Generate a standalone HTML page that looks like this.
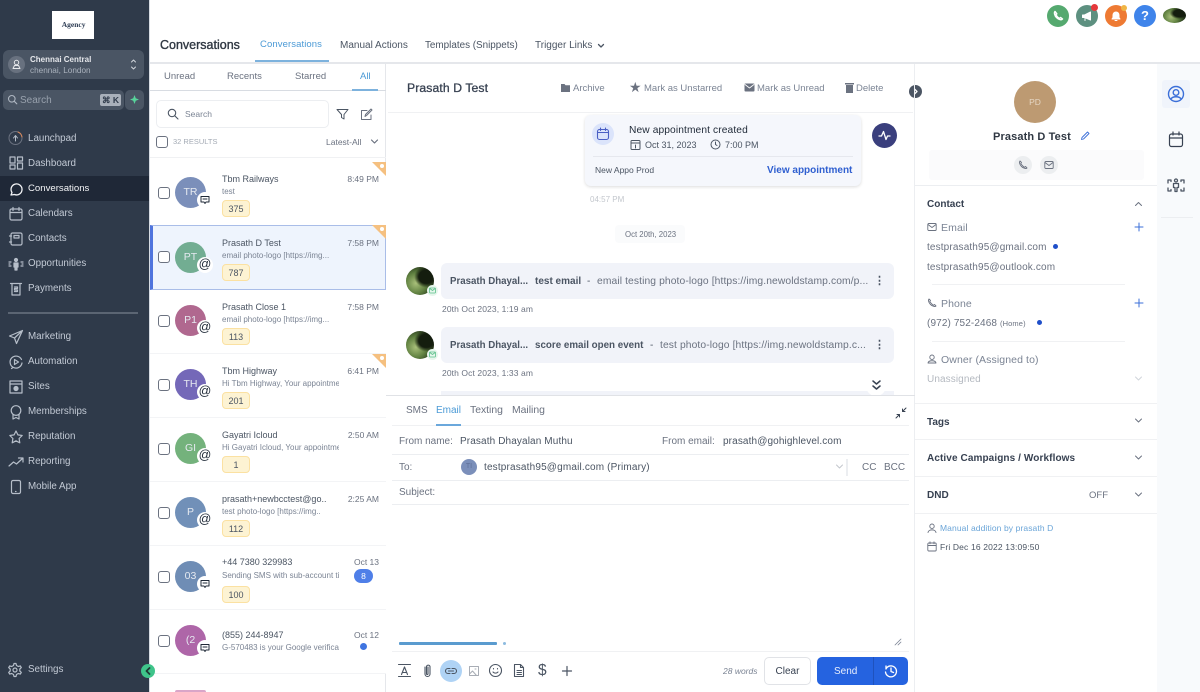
<!DOCTYPE html>
<html><head><meta charset="utf-8">
<style>
*{box-sizing:border-box}
html,body{margin:0;padding:0;width:1200px;height:692px;overflow:hidden;background:#fff;font-family:"Liberation Sans",sans-serif;color:#374151}
body{fill:none;stroke:currentColor;stroke-width:1.5;stroke-linecap:round;stroke-linejoin:round}
.a,.t{position:absolute}
.t{white-space:nowrap;line-height:14px}
svg{position:absolute}
.n{left:28px;font-size:9.8px;color:#c3cad5}
.ni{left:8px;color:#b6bec9}
.row{position:absolute;left:150px;width:236px;height:64px;border-bottom:1px solid #f3f4f6;background:#fff}
.cb{position:absolute;left:8px;top:25px;width:12px;height:12px;border:1px solid #6b7280;border-radius:3px;background:#fff}
.av{position:absolute;left:25px;top:15px;width:31px;height:31px;border-radius:50%;color:#e5e9f0;font-size:10.5px;line-height:31px;text-align:center}
.bd{position:absolute;left:47px;top:30px;width:16px;height:16px;border-radius:50%;background:#fff;color:#1f2937;font-size:12.5px;line-height:15px;text-align:center}
.nm{position:absolute;left:72px;top:11px;font-size:9px;color:#4b5563;white-space:nowrap;line-height:12px}
.pv{position:absolute;left:72px;top:24px;font-size:8px;color:#7b8494;white-space:nowrap;line-height:12px;width:117px;overflow:hidden}
.tg{position:absolute;left:72px;top:38px;width:28px;height:17px;border:1px solid #fbe1a2;background:#fdf3d3;border-radius:4px;font-size:9px;line-height:16px;text-align:center;color:#4b5563}
.tm{position:absolute;right:7px;top:11px;font-size:8.5px;color:#6b7280;line-height:12px;white-space:nowrap}
.st{position:absolute;right:0;top:0;width:0;height:0;border-top:14px solid #f5c080;border-left:14px solid transparent}
.st::after{content:"";position:absolute;right:2px;top:-12px;width:4px;height:4px;background:#fff;border-radius:50%}
.act{font-size:9.5px;color:#7b8494}
.lb{font-size:10.5px;color:#6b7280}
.tb{font-size:10.5px;color:#6b7280}
.h{font-size:10px;font-weight:bold;color:#374151}
.ph{background:radial-gradient(ellipse at 72% 35%,#141d0e 0 26%,transparent 42%),radial-gradient(circle at 35% 58%,#a9c07a 0,#5f8040 42%,#1c2a14 82%)}
</style></head><body>

<!-- sidebar -->
<div class="a" style="left:0;top:0;width:149px;height:692px;background:#2f3a4a"></div>
<div class="a" style="left:149px;top:0;width:1px;height:692px;background:#d7dbe2"></div>
<div class="a" style="left:52px;top:11px;width:42px;height:28px;background:#fff"></div>
<div class="t" style="left:58px;top:18px;font-family:'Liberation Serif',serif;font-size:7.5px;color:#2f3e55;font-weight:bold">&nbsp;&nbsp;Agency</div>
<div class="a" style="left:3px;top:50px;width:141px;height:29px;background:#4a5564;border-radius:6px"></div>
<div class="a" style="left:8px;top:56px;width:17px;height:17px;border-radius:50%;background:#68717f"></div>
<svg style="left:11px;top:59px;color:#e5e7eb" width="11" height="11" viewBox="0 0 11 11" stroke-width="1"><circle cx="5.5" cy="3.5" r="2.2"/><path d="M2 9.5h7l-1.5-3h-4z"/></svg>
<div class="t" style="left:30px;top:54px;font-size:8px;font-weight:bold;color:#e5e7eb;line-height:12px">Chennai Central</div>
<div class="t" style="left:30px;top:65px;font-size:8.2px;color:#aab2bd;line-height:12px">chennai, London</div>
<svg style="left:129px;top:57px;color:#d1d5db" width="9" height="15" viewBox="0 0 9 15" stroke-width="1"><path d="M2.5 5l2-2 2 2M2.5 10l2 2 2-2"/></svg>
<div class="a" style="left:3px;top:90px;width:121px;height:20px;background:#4a5564;border-radius:5px"></div>
<div class="a" style="left:125px;top:90px;width:19px;height:20px;background:#4a5564;border-radius:5px"></div>
<svg style="left:7px;top:94px;color:#aeb6c1" width="11" height="11" viewBox="0 0 11 11" stroke-width="1.100"><circle cx="4.8" cy="4.8" r="3.3"/><path d="M7.3 7.3l2.5 2.5"/></svg>
<div class="t" style="left:20px;top:93px;font-size:10px;color:#98a1ad;line-height:15px">Search</div>
<div class="a" style="left:100px;top:94px;width:21px;height:12px;background:#a9b0ba;border-radius:2px;color:#2f3a4a;font-size:8.5px;line-height:12px;text-align:center;font-weight:bold">⌘ K</div>
<div class="a" style="left:130px;top:95px;width:9px;height:9px;background:#58d39b;clip-path:polygon(50% 0,64% 36%,100% 50%,64% 64%,50% 100%,36% 64%,0 50%,36% 36%)"></div>

<div class="a" style="left:0;top:176px;width:149px;height:25px;background:#1f2837"></div>

<!-- nav icons -->
<svg class="ni" style="top:130px" width="16" height="16" viewBox="0 0 16 16" stroke-width="1"><circle cx="7.5" cy="8" r="6.5" stroke="#6b7280"/><path d="M7.5 11V6M5.500 8l2-2.500 2 2.500"/><path d="M10 2a6.500 6.500 0 0 1 4 5" stroke="#d9885a"/></svg>
<svg class="ni" style="top:155px" width="16" height="16" viewBox="0 0 16 16" stroke-width="1.200"><rect x="2" y="2" width="5" height="6"/><rect x="9.500" y="2" width="5" height="4"/><rect x="2" y="10" width="5" height="4"/><rect x="9.500" y="8" width="5" height="6"/></svg>
<svg style="left:8px;top:181px;color:#f3f4f6" width="16" height="16" viewBox="0 0 16 16" stroke-width="1.300"><path d="M3 14l1-2.500A5.500 5.500 0 1 1 6.500 13.500z"/></svg>
<svg class="ni" style="top:206px" width="16" height="16" viewBox="0 0 16 16" stroke-width="1.200"><rect x="2" y="3" width="12" height="11" rx="1.500"/><path d="M2 6.500h12M5 1.500v3M11 1.500v3"/></svg>
<svg class="ni" style="top:231px" width="16" height="16" viewBox="0 0 16 16" stroke-width="1.200"><rect x="3" y="2" width="11" height="12" rx="1.500"/><path d="M1.500 5h2M1.500 11h2M6 4.500h5v2.500H6z"/></svg>
<svg class="ni" style="top:256px" width="16" height="16" viewBox="0 0 16 16" stroke-width="1.200"><circle cx="8" cy="4" r="1.500" fill="currentColor"/><path d="M6 7h4v4H9v3H7v-3H6z" fill="currentColor"/><path d="M1 6h2M1 8h1M1 10h2M13 6h2M14 8h1M13 10h2"/></svg>
<svg class="ni" style="top:281px" width="16" height="16" viewBox="0 0 16 16" stroke-width="1.200"><path d="M2.500 2.500h11M4 2.500v11.500h8V2.500"/><path d="M6.500 6h3v1.500h-3v1.500h3v1.500h-3"/></svg>
<div class="a" style="left:8px;top:312px;width:130px;height:2px;background:#5b6573"></div>
<svg class="ni" style="top:329px" width="16" height="16" viewBox="0 0 16 16" stroke-width="1.200"><path d="M14.500 1.500L1.500 7l5 2 2 5.500zM6.500 9l8-7.500"/></svg>
<svg class="ni" style="top:354px" width="16" height="16" viewBox="0 0 16 16" stroke-width="1.200"><path d="M13.500 5.500A6 6 0 1 0 14 9M5 13.500l-1.500 1"/><path d="M6.500 5.500l4 2.500-4 2.500z"/></svg>
<svg class="ni" style="top:379px" width="16" height="16" viewBox="0 0 16 16" stroke-width="1.200"><rect x="2" y="2" width="12" height="12"/><path d="M2 5h12"/><circle cx="8" cy="9.500" r="2" fill="currentColor"/></svg>
<svg class="ni" style="top:404px" width="16" height="16" viewBox="0 0 16 16" stroke-width="1.200"><circle cx="8" cy="6.500" r="4.800"/><path d="M5 10.500V15l3-1.500 3 1.500v-4.500"/></svg>
<svg class="ni" style="top:429px" width="16" height="16" viewBox="0 0 16 16" stroke-width="1.200"><path d="M8 2l1.900 3.900 4.300.6-3.100 3 .7 4.300L8 11.800l-3.800 2 .7-4.300-3.100-3 4.300-.6z"/></svg>
<svg class="ni" style="top:454px" width="16" height="16" viewBox="0 0 16 16" stroke-width="1.200"><path d="M1 12l4.500-4 3 2L14.500 4.500M10.500 4h4.500v4"/></svg>
<svg class="ni" style="top:479px" width="16" height="16" viewBox="0 0 16 16" stroke-width="1.200"><rect x="3.500" y="1.500" width="9" height="13" rx="1.500"/><path d="M7.500 12.500h.5"/></svg>
<svg class="ni" style="top:662px" width="16" height="16" viewBox="0 0 16 16" stroke-width="1.200"><circle cx="7" cy="8" r="2"/><path d="M6 1.500h2l.5 2 1.800 1 2-.6 1 1.700-1.500 1.400v2l1.500 1.400-1 1.700-2-.6-1.800 1-.5 2H6l-.5-2-1.800-1-2 .6-1-1.700 1.500-1.400v-2L.7 5.600l1-1.700 2 .6 1.800-1z"/></svg>

<div class="t n" style="top:132px">Launchpad</div>
<div class="t n" style="top:157px">Dashboard</div>
<div class="t n" style="top:182px;color:#f3f4f6;font-size:9.600px">Conversations</div>
<div class="t n" style="top:207px">Calendars</div>
<div class="t n" style="top:232px">Contacts</div>
<div class="t n" style="top:257px">Opportunities</div>
<div class="t n" style="top:282px">Payments</div>
<div class="t n" style="top:330px">Marketing</div>
<div class="t n" style="top:355px">Automation</div>
<div class="t n" style="top:380px">Sites</div>
<div class="t n" style="top:405px">Memberships</div>
<div class="t n" style="top:430px">Reputation</div>
<div class="t n" style="top:455px">Reporting</div>
<div class="t n" style="top:480px">Mobile App</div>
<div class="t n" style="top:663px">Settings</div>

<!-- top bar -->
<div class="a" style="left:150px;top:62px;width:1050px;height:2px;background:#e5e7eb"></div>
<div class="t" style="left:160px;top:38px;font-size:12.500px;color:#2f3742;-webkit-text-stroke:.35px #2f3742">Conversations</div>
<div class="t" style="left:260px;top:38px;font-size:9.500px;color:#4b9ad6;letter-spacing:.1px">Conversations</div>
<div class="a" style="left:255px;top:60px;width:74px;height:2px;background:#7db2dd"></div>
<div class="t" style="left:340px;top:39px;font-size:10px;color:#4b5563">Manual Actions</div>
<div class="t" style="left:425px;top:39px;font-size:9.900px;color:#4b5563">Templates (Snippets)</div>
<div class="t" style="left:535px;top:39px;font-size:10px;color:#4b5563">Trigger Links</div>
<svg style="left:597px;top:42px;color:#4b5563" width="8" height="8" viewBox="0 0 8 8" stroke-width="1.300"><path d="M1.500 2.500L4 5l2.500-2.500"/></svg>

<div class="a" style="left:1047px;top:5px;width:22px;height:22px;border-radius:50%;background:#55a96f"></div>
<svg style="left:1052px;top:10px;color:#fff" width="12" height="12" viewBox="0 0 12 12" stroke-width="1.500"><path d="M3 1.500c-1 1-.5 4 1.500 6s5 3 6 1.500L8.500 7.500 7.500 8.500C6.500 8 4.500 6 3.800 4.800L4.800 3.800z"/></svg>
<div class="a" style="left:1076px;top:5px;width:22px;height:22px;border-radius:50%;background:#5d9080"></div>
<svg style="left:1081px;top:10px;color:#fff" width="12" height="12" viewBox="0 0 12 12" stroke-width="1"><path fill="#fff" d="M1.500 5v2.500h2L9.500 10V2L3.500 5z"/><path d="M4 8v2.500"/></svg>
<div class="a" style="left:1091px;top:4px;width:7px;height:7px;border-radius:50%;background:#e5383b"></div>
<div class="a" style="left:1105px;top:5px;width:22px;height:22px;border-radius:50%;background:#ee7a33"></div>
<svg style="left:1110px;top:10px;color:#fff" width="12" height="12" viewBox="0 0 12 12" stroke-width="1"><path d="M2 9h8L9 7.500V5a3 3 0 0 0-6 0v2.500z" fill="#fff"/><path d="M5 10.500h2"/></svg>
<div class="a" style="left:1121px;top:5px;width:6px;height:6px;border-radius:50%;background:#f0b545"></div>
<div class="a" style="left:1134px;top:5px;width:22px;height:22px;border-radius:50%;background:#3f84ea;color:#fff;font-size:13px;font-weight:bold;line-height:22px;text-align:center">?</div>
<div class="a ph" style="left:1163px;top:8px;width:23px;height:15px;border-radius:50%"></div>

<!-- list header -->
<div class="a" style="left:385px;top:64px;width:1px;height:628px;background:#e5e7eb"></div>
<div class="t tb" style="left:164px;top:70px;font-size:9.500px;line-height:13px">Unread</div>
<div class="t tb" style="left:227px;top:70px;font-size:9.500px;line-height:13px">Recents</div>
<div class="t tb" style="left:295px;top:70px;font-size:9.500px;line-height:13px">Starred</div>
<div class="t" style="left:360px;top:70px;font-size:9.500px;color:#4b9ad6;line-height:13px">All</div>
<div class="a" style="left:150px;top:90px;width:236px;height:1px;background:#d8dce2"></div>
<div class="a" style="left:352px;top:89px;width:26px;height:2px;background:#7db2dd"></div>
<div class="a" style="left:156px;top:100px;width:173px;height:28px;border:1px solid #eceef1;border-radius:5px"></div>
<svg style="left:167px;top:108px;color:#4b5563" width="12" height="12" viewBox="0 0 12 12" stroke-width="1.100"><circle cx="5" cy="5" r="3.700"/><path d="M8 8l3 3"/></svg>
<div class="t" style="left:185px;top:107px;font-size:8.500px;color:#7b8494">Search</div>
<svg style="left:336px;top:108px;color:#4b5563" width="13" height="13" viewBox="0 0 13 13" stroke-width="1"><path d="M1 1.500h11L8 6.500v4.500L5.500 9.500v-3z"/></svg>
<svg style="left:360px;top:108px;color:#6b7280" width="13" height="13" viewBox="0 0 13 13" stroke-width="1"><path d="M11 7v4.500H1.500V2.500H7M5 8.500l.5-2L11 1l1 1-5.500 5.500z"/></svg>
<div class="a" style="left:156px;top:136px;width:12px;height:12px;border:1px solid #6b7280;border-radius:3px"></div>
<div class="t" style="left:173px;top:135px;font-size:7.500px;color:#a3aab4">32 RESULTS</div>
<div class="t" style="left:326px;top:135px;font-size:8.500px;color:#6b7280">Latest-All</div>
<svg style="left:370px;top:138px;color:#6b7280" width="9" height="8" viewBox="0 0 9 8" stroke-width="1.200"><path d="M1.500 2L4.500 5l3-3"/></svg>
<div class="a" style="left:150px;top:157px;width:236px;height:1px;background:#f0f1f3"></div>

<!-- rows -->
<div class="row" style="top:162px"><div class="st"></div><div class="cb"></div><div class="av" style="background:#7b8fba">TR</div><div class="bd"><svg style="left:3px;top:3px" width="10" height="10" viewBox="0 0 10 10" stroke-width="1"><path d="M1 1.500h8v5.500H6L5 8.500 4 7H1zM3 4h4"/></svg></div><div class="nm">Tbm Railways</div><div class="pv">test</div><div class="tg">375</div><div class="tm">8:49 PM</div></div>
<div class="row" style="top:225px;height:65px;background:#eef4fd;border:1px solid #a9bde8;border-left:3px solid #4f74dd"><div class="st" style="top:-1px;right:-1px"></div><div class="cb" style="left:5px;top:25px"></div><div class="av" style="left:22px;top:16px;background:#72ad92">PT</div><div class="bd" style="left:44px;top:31px">@</div><div class="nm" style="left:69px;top:11px">Prasath D Test</div><div class="pv" style="left:69px;top:24px;width:110px">email photo-logo [https://img...</div><div class="tg" style="left:69px;top:38px">787</div><div class="tm" style="right:6px;top:11px">7:58 PM</div></div>
<div class="row" style="top:290px"><div class="cb"></div><div class="av" style="background:#b0688f">P1</div><div class="bd">@</div><div class="nm">Prasath Close 1</div><div class="pv" style="width:110px">email photo-logo [https://img...</div><div class="tg">113</div><div class="tm">7:58 PM</div></div>
<div class="row" style="top:354px"><div class="st"></div><div class="cb"></div><div class="av" style="background:#7468b8">TH</div><div class="bd">@</div><div class="nm">Tbm Highway</div><div class="pv">Hi Tbm Highway, Your appointment</div><div class="tg">201</div><div class="tm">6:41 PM</div></div>
<div class="row" style="top:418px"><div class="cb"></div><div class="av" style="background:#74b27c">GI</div><div class="bd">@</div><div class="nm">Gayatri Icloud</div><div class="pv">Hi Gayatri Icloud, Your appointment</div><div class="tg">1</div><div class="tm">2:50 AM</div></div>
<div class="row" style="top:482px"><div class="cb"></div><div class="av" style="background:#7190b8">P</div><div class="bd">@</div><div class="nm">prasath+newbcctest@go..</div><div class="pv">test photo-logo [https://img..</div><div class="tg">112</div><div class="tm">2:25 AM</div></div>
<div class="row" style="top:546px"><div class="cb"></div><div class="av" style="background:#6f8db5">03</div><div class="bd"><svg style="left:3px;top:3px" width="10" height="10" viewBox="0 0 10 10" stroke-width="1"><path d="M1 1.500h8v5.500H6L5 8.500 4 7H1zM3 4h4"/></svg></div><div class="nm" style="top:10px">+44 7380 329983</div><div class="pv">Sending SMS with sub-account time</div><div class="tg" style="top:40px">100</div><div class="tm" style="top:10px">Oct 13</div><div class="a" style="right:13px;top:23px;width:19px;height:14px;border-radius:7px;background:#4f7fe8;color:#fff;font-size:8.500px;line-height:14px;text-align:center">8</div></div>
<div class="row" style="top:610px"><div class="cb"></div><div class="av" style="background:#ae66a8">(2</div><div class="bd"><svg style="left:3px;top:3px" width="10" height="10" viewBox="0 0 10 10" stroke-width="1"><path d="M1 1.500h8v5.500H6L5 8.500 4 7H1zM3 4h4"/></svg></div><div class="nm" style="top:19px">(855) 244-8947</div><div class="pv" style="top:32px">G-570483 is your Google verification</div><div class="tm" style="top:19px">Oct 12</div><div class="a" style="right:19px;top:33px;width:7px;height:7px;border-radius:50%;background:#3f74e0"></div></div>
<div class="a" style="left:175px;top:690px;width:31px;height:2px;background:#d9a5c8;border-radius:15px 15px 0 0"></div>

<!-- collapse toggle -->
<div class="a" style="left:141px;top:664px;width:14px;height:14px;border-radius:50%;background:#3fc48a"></div>
<svg style="left:144px;top:667px;color:#1f3b36" width="8" height="8" viewBox="0 0 8 8" stroke-width="1.800"><path d="M5.500 1L2.500 4l3 3"/></svg>

<!-- conversation header -->
<div class="t" style="left:407px;top:81px;font-size:12.200px;color:#374151;-webkit-text-stroke:.3px #374151;letter-spacing:.1px">Prasath D Test</div>
<svg style="left:560px;top:83px;fill:#6b7280;stroke:none" width="11" height="10" viewBox="0 0 11 10"><path d="M1 1h3.500l1 1.200H10V9H1z"/></svg>
<div class="t act" style="left:573px;top:82px">Archive</div>
<div class="t" style="left:629px;top:80px;font-size:14px;color:#6b7280">★</div>
<div class="t act" style="left:644px;top:82px">Mark as Unstarred</div>
<svg style="left:744px;top:83px" width="11" height="9" viewBox="0 0 11 9"><rect x=".5" y=".5" width="10" height="8" rx="1" fill="#6b7280" stroke="none"/><path d="M1 1.500l4.500 3.500L10 1.500" stroke="#fff" stroke-width=".8"/></svg>
<div class="t act" style="left:757px;top:82px">Mark as Unread</div>
<svg style="left:845px;top:82px;fill:#6b7280;stroke:none" width="9" height="11" viewBox="0 0 9 11"><path d="M0 1h9v1.500H0zM1 3h7v8H1z"/></svg>
<div class="t act" style="left:856px;top:82px">Delete</div>
<div class="a" style="left:909px;top:85px;width:13px;height:13px;border-radius:50%;background:#4b5563"></div>
<svg style="left:912px;top:88px;color:#fff" width="7" height="7" viewBox="0 0 7 7" stroke-width="1.300"><path d="M2.500 1l2.500 2.500L2.500 6"/></svg>
<div class="a" style="left:388px;top:112px;width:525px;height:1px;background:#f0f1f3"></div>
<div class="a" style="left:914px;top:64px;width:1px;height:628px;background:#eceef1"></div>

<!-- appointment card -->
<div class="a" style="left:585px;top:115px;width:276px;height:71px;background:#f5f7fc;border-radius:6px;box-shadow:0 1px 3px rgba(0,0,0,.14)"></div>
<div class="a" style="left:592px;top:123px;width:22px;height:22px;border-radius:50%;background:#dbe4fb"></div>
<svg style="left:596px;top:127px;color:#4a5fc4" width="14" height="14" viewBox="0 0 14 14" stroke-width="1.100"><rect x="1.500" y="2.500" width="11" height="10" rx="2"/><path d="M1.500 5.500h11M4.500 1v2.500M9.500 1v2.500"/></svg>
<div class="t" style="left:629px;top:123px;font-size:10.200px;color:#1f2937;letter-spacing:.12px;line-height:15px">New appointment created</div>
<svg style="left:630px;top:139px;color:#4b5563" width="11" height="11" viewBox="0 0 11 11" stroke-width="1"><rect x="1" y="1.500" width="9" height="9" rx="1"/><path d="M1 4h9M5.500 6v3"/></svg>
<div class="t" style="left:645px;top:138px;font-size:9px;color:#4b5563;line-height:15px">Oct 31, 2023</div>
<svg style="left:710px;top:139px;color:#4b5563" width="11" height="11" viewBox="0 0 11 11" stroke-width="1"><circle cx="5.500" cy="5.500" r="4.500"/><path d="M5.500 3v2.500l1.500 1"/></svg>
<div class="t" style="left:725px;top:138px;font-size:9px;color:#4b5563;line-height:15px">7:00 PM</div>
<div class="a" style="left:593px;top:156px;width:260px;height:1px;background:#e6e8ee"></div>
<div class="t" style="left:595px;top:163px;font-size:8.500px;color:#4b5563">New Appo Prod</div>
<div class="t" style="left:767px;top:164px;font-size:10px;font-weight:bold;color:#2f5fd0;line-height:14px">View appointment</div>
<div class="a" style="left:872px;top:123px;width:25px;height:25px;border-radius:50%;background:#3a3f7d"></div>
<svg style="left:878px;top:129px;color:#fff" width="13" height="13" viewBox="0 0 13 13" stroke-width="1.300"><path d="M1 7h2.500l2-4.500 2.500 8 1.500-3.500H12"/></svg>
<div class="t" style="left:590px;top:193px;font-size:8px;color:#c3c7cd">04:57 PM</div>
<div class="a" style="left:615px;top:225px;width:70px;height:18px;border-radius:4px;background:#fafbfc"></div>
<div class="t" style="left:625px;top:228px;font-size:7.800px;color:#6b7280">Oct 20th, 2023</div>

<!-- emails -->
<div class="a ph" style="left:406px;top:267px;width:28px;height:28px;border-radius:50%"></div>
<div class="a" style="left:427px;top:285px;width:11px;height:11px;border-radius:50%;background:#e6f6ec"></div>
<svg style="left:429px;top:287px;color:#5cc08a" width="7" height="7" viewBox="0 0 7 7" stroke-width=".8"><rect x=".5" y="1" width="6" height="5" rx=".8"/><path d="M.8 1.500L3.500 3.500 6.200 1.500"/></svg>
<div class="a" style="left:441px;top:263px;width:453px;height:36px;border-radius:6px;background:#f1f3f9"></div>
<div class="t" style="left:450px;top:275px;font-size:9.700px;font-weight:bold;color:#4b5563">Prasath Dhayal...</div>
<div class="t" style="left:535px;top:275px;font-size:10px;font-weight:bold;color:#4b5563">test email</div>
<div class="t" style="left:587px;top:275px;font-size:10px;color:#4b5563">-</div>
<div class="t" style="left:597px;top:275px;font-size:10.300px;color:#6b7280;letter-spacing:.1px">email testing photo-logo [https://img.newoldstamp.com/p...</div>
<div class="t" style="left:874px;top:274px;font-size:11px;font-weight:bold;color:#4b5563">⋮</div>
<div class="t" style="left:442px;top:302px;font-size:8.500px;color:#6b7280;letter-spacing:.1px">20th Oct 2023, 1:19 am</div>

<div class="a ph" style="left:406px;top:331px;width:28px;height:28px;border-radius:50%"></div>
<div class="a" style="left:427px;top:349px;width:11px;height:11px;border-radius:50%;background:#e6f6ec"></div>
<svg style="left:429px;top:351px;color:#5cc08a" width="7" height="7" viewBox="0 0 7 7" stroke-width=".8"><rect x=".5" y="1" width="6" height="5" rx=".8"/><path d="M.8 1.500L3.500 3.500 6.200 1.500"/></svg>
<div class="a" style="left:441px;top:327px;width:453px;height:36px;border-radius:6px;background:#f1f3f9"></div>
<div class="t" style="left:450px;top:339px;font-size:9.700px;font-weight:bold;color:#4b5563">Prasath Dhayal...</div>
<div class="t" style="left:535px;top:339px;font-size:9.800px;font-weight:bold;color:#4b5563">score email open event</div>
<div class="t" style="left:650px;top:339px;font-size:10px;color:#4b5563">-</div>
<div class="t" style="left:660px;top:339px;font-size:10.300px;color:#6b7280;letter-spacing:.1px">test photo-logo [https://img.newoldstamp.c...</div>
<div class="t" style="left:874px;top:338px;font-size:11px;font-weight:bold;color:#4b5563">⋮</div>
<div class="t" style="left:442px;top:366px;font-size:8.500px;color:#6b7280;letter-spacing:.1px">20th Oct 2023, 1:33 am</div>
<div class="a" style="left:441px;top:391px;width:453px;height:5px;background:#f1f3f9"></div>
<div class="a" style="left:866px;top:376px;width:20px;height:20px;border-radius:50%;background:#fff"></div>
<svg style="left:871px;top:379px;color:#374151" width="11" height="13" viewBox="0 0 11 13" stroke-width="1.500"><path d="M2 2l3.500 3L9 2M2 7l3.500 3L9 7"/></svg>
<div class="a" style="left:386px;top:395px;width:529px;height:1px;background:#e0e2e6"></div>

<!-- composer -->
<div class="t tb" style="left:406px;top:404px;font-size:10px;line-height:13px">SMS</div>
<div class="t" style="left:436px;top:404px;font-size:10px;color:#4b9ad6;line-height:13px">Email</div>
<div class="t tb" style="left:470px;top:404px;font-size:10.400px;line-height:13px">Texting</div>
<div class="t tb" style="left:512px;top:404px;font-size:10.400px;line-height:13px">Mailing</div>
<div class="a" style="left:392px;top:425px;width:517px;height:1px;background:#f0f1f3"></div>
<div class="a" style="left:436px;top:424px;width:25px;height:2px;background:#6ba8dc"></div>
<svg style="left:895px;top:407px;color:#374151" width="12" height="12" viewBox="0 0 12 12" stroke-width="1"><path d="M11 1L7.500 4.500M7.500 2v2.500H10M1 11l3.500-3.500M2 7.500h2.500V10"/></svg>
<div class="t lb" style="left:399px;top:435px;font-size:10px">From name:</div>
<div class="t" style="left:460px;top:435px;font-size:10px;color:#4b5563;letter-spacing:.12px">Prasath Dhayalan Muthu</div>
<div class="t lb" style="left:662px;top:435px;font-size:10px">From email:</div>
<div class="t" style="left:723px;top:435px;font-size:10px;color:#4b5563;letter-spacing:.12px">prasath@gohighlevel.com</div>
<div class="a" style="left:392px;top:454px;width:517px;height:1px;background:#eceef1"></div>
<div class="t lb" style="left:399px;top:461px;font-size:10px">To:</div>
<div class="a" style="left:461px;top:459px;width:16px;height:16px;border-radius:50%;background:#7b8fba;color:#5e6f97;font-size:7px;line-height:16px;text-align:center">TI</div>
<div class="t" style="left:484px;top:461px;font-size:10px;color:#4b5563;letter-spacing:.17px">testprasath95@gmail.com (Primary)</div>
<svg style="left:835px;top:463px;color:#c3c7cd" width="9" height="8" viewBox="0 0 9 8" stroke-width="1"><path d="M1.500 2L4.500 5l3-3"/></svg>
<div class="a" style="left:846px;top:459px;width:2px;height:17px;background:#eceef1"></div>
<div class="t lb" style="left:862px;top:461px;font-size:10px">CC</div>
<div class="t lb" style="left:884px;top:461px;font-size:10px">BCC</div>
<div class="a" style="left:392px;top:480px;width:517px;height:1px;background:#eceef1"></div>
<div class="t lb" style="left:399px;top:486px;font-size:10px">Subject:</div>
<div class="a" style="left:392px;top:504px;width:517px;height:1px;background:#eceef1"></div>
<div class="a" style="left:399px;top:642px;width:98px;height:3px;background:#5a9bcf;border-radius:1px"></div>
<div class="a" style="left:503px;top:642px;width:3px;height:3px;border-radius:50%;background:#8dbbe0"></div>
<svg style="left:894px;top:638px;color:#7b8494" width="8" height="8" viewBox="0 0 8 8" stroke-width=".8"><path d="M7 1L1 7M7 4L4 7"/></svg>
<div class="a" style="left:392px;top:651px;width:517px;height:1px;background:#f0f1f3"></div>

<svg style="left:397px;top:663px;color:#4b5563" width="15" height="15" viewBox="0 0 15 15" stroke-width="1.100"><path d="M1.500 1.500h12M1.500 13.500h12M4.500 11.500L7.500 4l3 7.500M5.500 9.500h4"/></svg>
<svg style="left:420px;top:663px;color:#4b5563" width="15" height="15" viewBox="0 0 15 15" stroke-width="1.100"><path d="M5 4v7a2.500 2.500 0 0 0 5 0V3.500a1.800 1.800 0 0 0-3.500 0V11a.8.8 0 0 0 1.500 0V4"/></svg>
<div class="a" style="left:440px;top:660px;width:22px;height:22px;border-radius:50%;background:#afd3f5"></div>
<svg style="left:444px;top:664px;color:#4b5563" width="14" height="14" viewBox="0 0 14 14" stroke-width="1.100"><path d="M6 4.500H4a2.500 2.500 0 0 0 0 5h2M8 4.500h2a2.500 2.500 0 0 1 0 5H8M4.500 7h5"/></svg>
<svg style="left:467px;top:664px;color:#a8adb5" width="14" height="14" viewBox="0 0 14 14" stroke-width="1"><rect x="2.500" y="2.500" width="9" height="9"/><path d="M2.500 10l3-3 4 4.500M8 5h1"/></svg>
<svg style="left:488px;top:663px;color:#4b5563" width="15" height="15" viewBox="0 0 15 15" stroke-width="1.100"><circle cx="7.500" cy="7.500" r="6"/><path d="M5 9c1.500 1.500 3.500 1.500 5 0M5.500 5.500v.5M9.500 5.500v.5"/></svg>
<svg style="left:512px;top:663px;color:#4b5563" width="14" height="15" viewBox="0 0 14 15" stroke-width="1.100"><path d="M2.500 1.500h6l3 3v9h-9zM8.500 1.500v3h3M5 7.500h4.500M5 9.500h4.500M5 11.500h4.500"/></svg>
<div class="t" style="left:538px;top:664px;font-size:15.500px;color:#4b5563">$</div>
<svg style="left:561px;top:665px;color:#4b5563" width="12" height="12" viewBox="0 0 12 12" stroke-width="1.200"><path d="M6 1.500v9M1.500 6h9"/></svg>
<div class="t" style="left:723px;top:664px;font-size:8.500px;font-style:italic;color:#7b8494">28 words</div>
<div class="a" style="left:764px;top:657px;width:47px;height:28px;border:1px solid #e1e3e7;border-radius:5px;font-size:10px;line-height:28px;text-align:center;color:#374151">Clear</div>
<div class="a" style="left:817px;top:657px;width:91px;height:28px;border-radius:5px;background:#2563e0"></div>
<div class="a" style="left:873px;top:657px;width:1px;height:28px;background:#1f52bd"></div>
<div class="t" style="left:834px;top:665px;font-size:10px;color:#e8eefc">Send</div>
<svg style="left:884px;top:664px;color:#fff" width="14" height="14" viewBox="0 0 14 14" stroke-width="1.300"><path d="M2 5A5.500 5.500 0 1 1 1.500 8M2 5V2M7 4v3.500l2.500 1"/></svg>

<!-- contact panel -->
<div class="a" style="left:1157px;top:64px;width:43px;height:628px;background:#f8fafc"></div>
<div class="a" style="left:1162px;top:80px;width:28px;height:28px;background:#f0f4fb;border-radius:3px"></div>
<svg style="left:1167px;top:85px;color:#3b6fd8" width="18" height="18" viewBox="0 0 18 18" stroke-width="1.400"><circle cx="9" cy="9" r="7.500"/><circle cx="9" cy="7.500" r="2.800"/><path d="M3.800 14c2-3 8.400-3 10.400 0"/></svg>
<svg style="left:1168px;top:131px;color:#374151" width="16" height="17" viewBox="0 0 16 17" stroke-width="1.200"><rect x="1.500" y="3" width="13" height="12.500" rx="2"/><path d="M1.500 7h13M5 1v3M11 1v3"/></svg>
<svg style="left:1167px;top:178px;color:#4b5563" width="18" height="15" viewBox="0 0 18 15" stroke-width="1.300"><circle cx="9" cy="2.500" r="1.500"/><path d="M6.500 5.500h5v4h-1.500v4H8v-4H6.500zM1 2h3v1.500M1 2v3M17 2h-3v1.500M17 2v3M1 13h3v-1.500M1 13v-3M17 13h-3v-1.500M17 13v-3"/></svg>
<div class="a" style="left:1161px;top:217px;width:32px;height:1px;background:#eceef1"></div>

<div class="a" style="left:1014px;top:81px;width:42px;height:42px;border-radius:50%;background:#bd9a72;color:#e5d6c3;font-size:8.500px;line-height:42px;text-align:center">PD</div>
<div class="t" style="left:993px;top:130px;font-size:11px;font-weight:bold;color:#2f3742;letter-spacing:.12px">Prasath D Test</div>
<svg style="left:1080px;top:131px;color:#3b6fd8" width="10" height="10" viewBox="0 0 10 10" stroke-width=".9"><path d="M1.500 8.500l.5-2L7.500 1l1.500 1.500L3.500 8z"/></svg>
<div class="a" style="left:929px;top:150px;width:215px;height:30px;background:#fbfbfc;border-radius:3px"></div>
<div class="a" style="left:1014px;top:156px;width:18px;height:18px;border-radius:50%;background:#eceef0"></div>
<svg style="left:1018px;top:160px;color:#6b7280" width="10" height="10" viewBox="0 0 10 10" stroke-width=".9"><path d="M2 1C1 2 1.500 4.500 3.500 6.500S8 9 9 8L7.500 6.500 6.500 7.300C5.500 6.800 3.200 4.500 2.800 3.500L3.500 2.500z"/></svg>
<div class="a" style="left:1040px;top:156px;width:18px;height:18px;border-radius:50%;background:#eceef0"></div>
<svg style="left:1044px;top:160px;color:#6b7280" width="10" height="10" viewBox="0 0 10 10" stroke-width=".9"><rect x=".8" y="1.500" width="8.400" height="7" rx="1"/><path d="M1 2.500l4 3 4-3"/></svg>
<div class="a" style="left:915px;top:185px;width:242px;height:1px;background:#eceef1"></div>

<div class="t h" style="left:927px;top:198px">Contact</div>
<svg style="left:1134px;top:200px;color:#6b7280" width="9" height="8" viewBox="0 0 9 8" stroke-width="1"><path d="M1.500 5.500L4.500 2.500l3 3"/></svg>
<svg style="left:927px;top:222px;color:#6b7280" width="10" height="10" viewBox="0 0 10 10" stroke-width=".9"><rect x=".8" y="1.500" width="8.400" height="7" rx="1"/><path d="M1 2.500l4 3 4-3"/></svg>
<div class="t lb" style="left:941px;top:221px;color:#7b8494;letter-spacing:.1px">Email</div>
<svg style="left:1134px;top:222px;color:#3b6fd8" width="10" height="10" viewBox="0 0 10 10" stroke-width="1"><path d="M5 1v8M1 5h8"/></svg>
<div class="t lb" style="left:927px;top:241px;font-size:10px;letter-spacing:.14px;line-height:13px">testprasath95@gmail.com</div>
<div class="a" style="left:1053px;top:244px;width:5px;height:5px;border-radius:50%;background:#1f4fc9"></div>
<div class="t lb" style="left:927px;top:261px;font-size:10px;letter-spacing:.14px;line-height:13px">testprasath95@outlook.com</div>
<div class="a" style="left:932px;top:284px;width:193px;height:1px;background:#f0f1f3"></div>
<svg style="left:927px;top:298px;color:#6b7280" width="10" height="10" viewBox="0 0 10 10" stroke-width=".9"><path d="M2 1C1 2 1.500 4.500 3.500 6.500S8 9 9 8L7.500 6.500 6.500 7.300C5.500 6.800 3.200 4.500 2.800 3.500L3.500 2.500z"/></svg>
<div class="t lb" style="left:941px;top:297px;color:#7b8494;letter-spacing:.1px">Phone</div>
<svg style="left:1134px;top:298px;color:#3b6fd8" width="10" height="10" viewBox="0 0 10 10" stroke-width="1"><path d="M5 1v8M1 5h8"/></svg>
<div class="t lb" style="left:927px;top:317px;font-size:10px;letter-spacing:.12px;line-height:13px">(972) 752-2468 <span style="font-size:7.500px">(Home)</span></div>
<div class="a" style="left:1037px;top:320px;width:5px;height:5px;border-radius:50%;background:#1f4fc9"></div>
<div class="a" style="left:932px;top:341px;width:193px;height:1px;background:#f0f1f3"></div>
<svg style="left:927px;top:354px;color:#6b7280" width="10" height="10" viewBox="0 0 10 10" stroke-width=".9"><circle cx="5" cy="3.200" r="2.200"/><path d="M1 9c.5-3 7.500-3 8 0z"/></svg>
<div class="t lb" style="left:941px;top:353px;color:#7b8494;letter-spacing:.1px">Owner (Assigned to)</div>
<div class="t lb" style="left:927px;top:373px;font-size:10px;color:#b4b9c0;letter-spacing:.1px;line-height:13px">Unassigned</div>
<svg style="left:1134px;top:375px;color:#d1d5db" width="9" height="8" viewBox="0 0 9 8" stroke-width="1"><path d="M1.500 2L4.500 5l3-3"/></svg>
<div class="a" style="left:915px;top:403px;width:242px;height:1px;background:#f0f1f3"></div>
<div class="t h" style="left:927px;top:416px">Tags</div>
<svg style="left:1134px;top:417px;color:#6b7280" width="9" height="8" viewBox="0 0 9 8" stroke-width="1"><path d="M1.500 2L4.500 5l3-3"/></svg>
<div class="a" style="left:915px;top:439px;width:242px;height:1px;background:#f0f1f3"></div>
<div class="t h" style="left:927px;top:452px;letter-spacing:.1px;line-height:13px">Active Campaigns / Workflows</div>
<svg style="left:1134px;top:454px;color:#6b7280" width="9" height="8" viewBox="0 0 9 8" stroke-width="1"><path d="M1.500 2L4.500 5l3-3"/></svg>
<div class="a" style="left:915px;top:476px;width:242px;height:1px;background:#f0f1f3"></div>
<div class="t h" style="left:927px;top:489px">DND</div>
<div class="t lb" style="left:1089px;top:489px;font-size:9.500px">OFF</div>
<svg style="left:1134px;top:491px;color:#6b7280" width="9" height="8" viewBox="0 0 9 8" stroke-width="1"><path d="M1.500 2L4.500 5l3-3"/></svg>
<div class="a" style="left:915px;top:513px;width:242px;height:1px;background:#f0f1f3"></div>
<svg style="left:927px;top:523px;color:#6b7280" width="10" height="10" viewBox="0 0 10 10" stroke-width=".9"><circle cx="5" cy="3.200" r="2.200"/><path d="M1 9.500c.5-3.500 7.500-3.500 8 0"/></svg>
<div class="t" style="left:940px;top:521px;font-size:8.500px;color:#6ba5d8;letter-spacing:.1px">Manual addition by prasath D</div>
<svg style="left:927px;top:541px;color:#6b7280" width="10" height="11" viewBox="0 0 10 11" stroke-width=".9"><rect x=".8" y="2" width="8.400" height="8" rx="1"/><path d="M.8 4.500h8.400M3 .8v2M7 .8v2"/></svg>
<div class="t" style="left:940px;top:540px;font-size:8.500px;color:#4b5563;letter-spacing:.15px">Fri Dec 16 2022 13:09:50</div>

</body></html>
